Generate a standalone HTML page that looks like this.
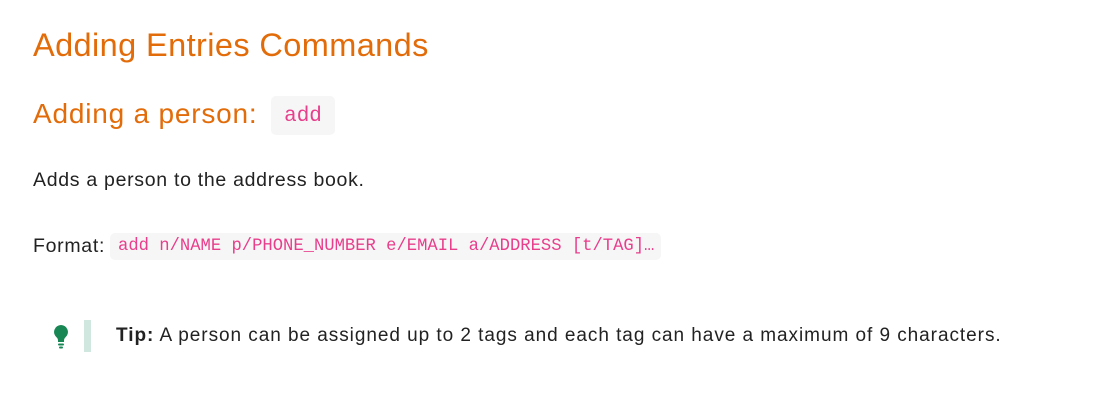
<!DOCTYPE html><html><head><style>
body{margin:0;width:1098px;height:409px;background:#fff;font-family:"Liberation Sans",sans-serif;color:#222;position:relative;overflow:hidden}
.a{position:absolute;white-space:nowrap}
h1,h2{margin:0;font-weight:normal;color:#e36c0a}
code{font-family:"Liberation Mono",monospace;color:#e83e8c;background:#f6f6f6;border-radius:5px}
</style></head><body>
<h1 class="a" style="left:33px;top:27px;font-size:32.5px;letter-spacing:0.4px">Adding Entries Commands</h1>
<h2 class="a" style="left:33px;top:98px;font-size:28px;letter-spacing:0.8px">Adding a person:</h2>
<code class="a" style="left:271px;top:96px;width:64px;height:39px;font-size:21px;line-height:41px;text-align:center">add</code>
<div class="a" style="left:33px;top:169px;font-size:19.5px;letter-spacing:0.7px">Adds a person to the address book.</div>
<div class="a" style="left:33px;top:233px;font-size:19.5px;letter-spacing:0.7px;line-height:27px">Format:</div>
<code class="a" style="left:110px;top:233px;width:551px;height:27px;font-size:17.2px;line-height:27px;padding-left:8px;box-sizing:border-box">add n/NAME p/PHONE_NUMBER e/EMAIL a/ADDRESS [t/TAG]…</code>
<svg class="a" style="left:53px;top:324px" width="16" height="26" viewBox="0 0 16 26"><path d="M8 1a7 7 0 0 0-4.5 12.3c1 1 1.5 2 1.5 3.2v1.5h6v-1.5c0-1.2.5-2.2 1.5-3.2A7 7 0 0 0 8 1z" fill="#198754"/><rect x="5" y="19.5" width="6" height="2" rx="1" fill="#198754"/><rect x="6" y="22.5" width="4" height="2" rx="1" fill="#198754"/></svg>
<div class="a" style="left:84px;top:320px;width:7px;height:32px;background:#cfe7de"></div>
<div class="a" style="left:116px;top:325px;font-size:19px;letter-spacing:0.95px"><b>Tip:</b> A person can be assigned up to 2 tags and each tag can have a maximum of 9 characters.</div>
</body></html>
